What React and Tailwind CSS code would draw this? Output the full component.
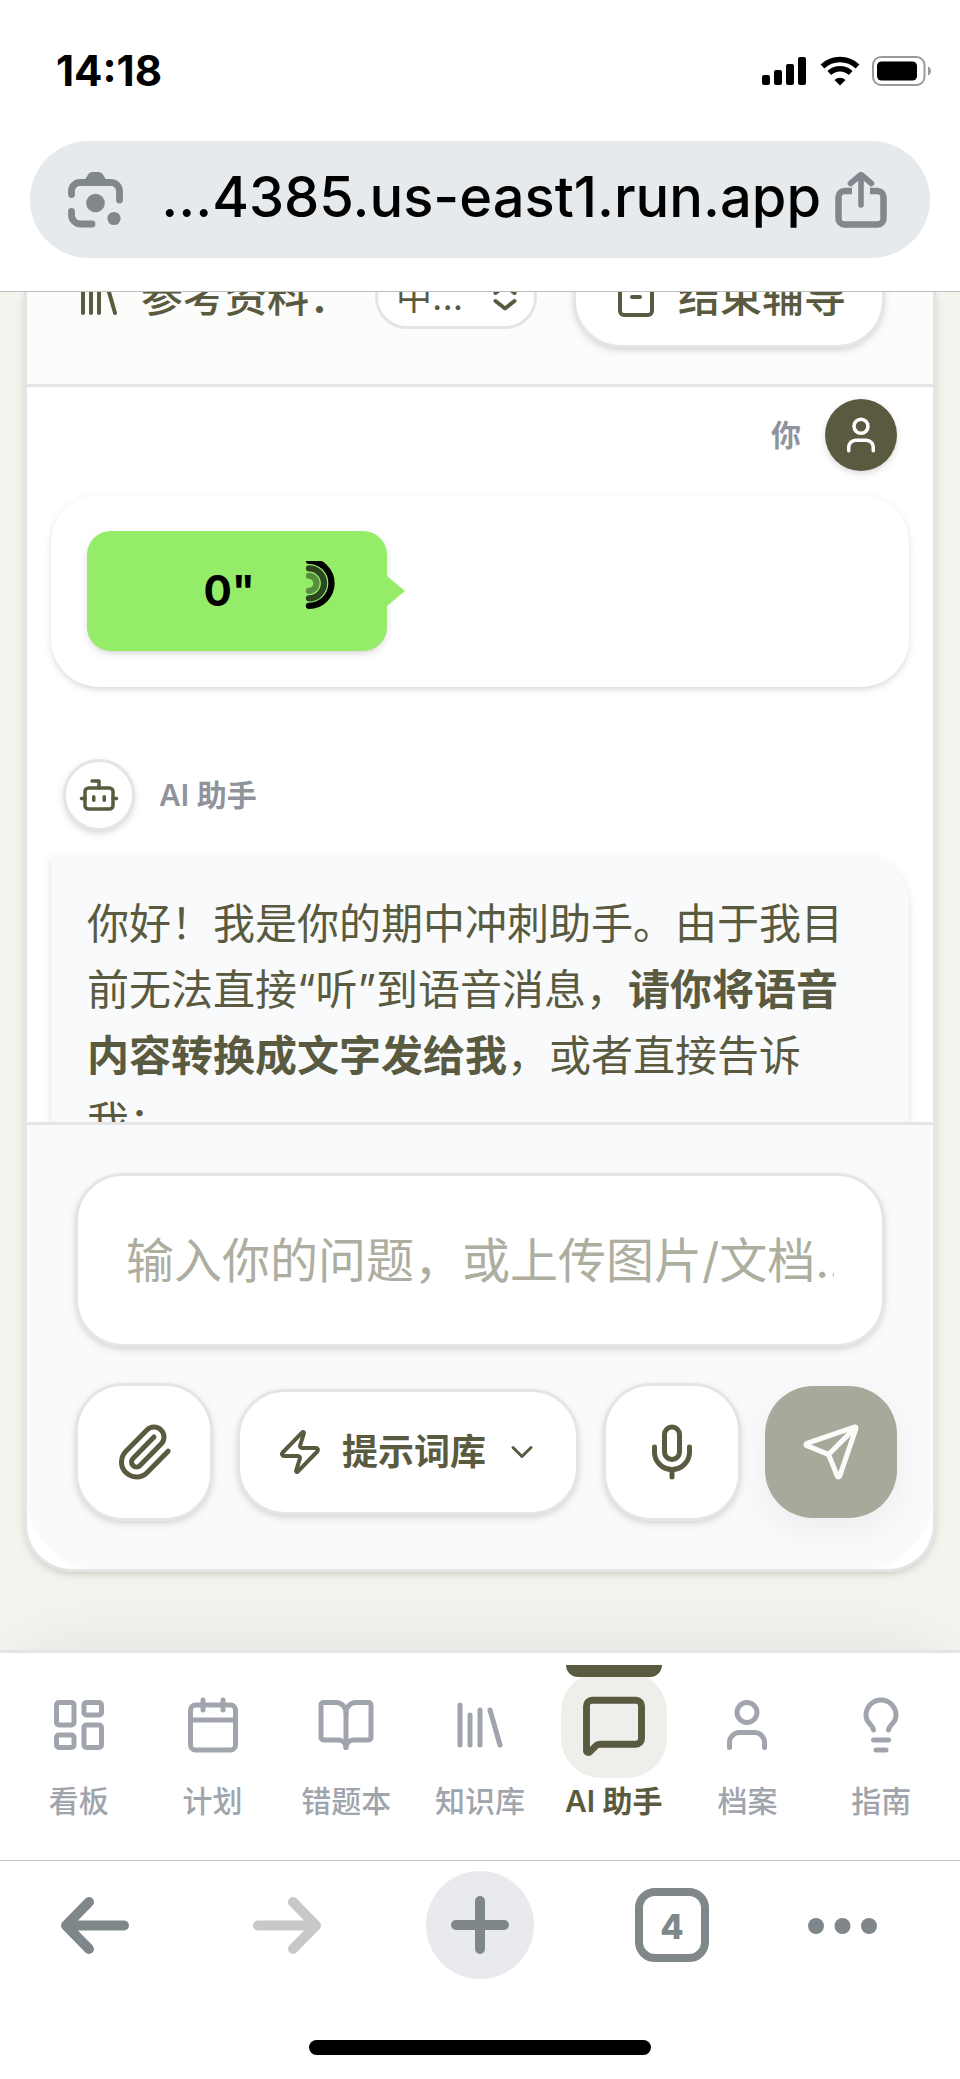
import { useState } from "react";
import {
  Archive,
  Bot,
  BookOpen,
  Calendar,
  ChevronDown,
  LayoutDashboard,
  Library,
  Lightbulb,
  MessageSquare,
  Mic,
  Paperclip,
  Send,
  User,
  Zap,
} from "lucide-react";

const navItems = [
  { id: "dashboard", label: "看板", icon: LayoutDashboard },
  { id: "plan", label: "计划", icon: Calendar },
  { id: "mistakes", label: "错题本", icon: BookOpen },
  { id: "library", label: "知识库", icon: Library },
  { id: "assistant", label: "AI 助手", icon: MessageSquare },
  { id: "profile", label: "档案", icon: User },
  { id: "guide", label: "指南", icon: Lightbulb },
];

const softShadow = "shadow-[0_3px_9px_rgba(0,0,0,0.1),0_3px_6px_-3px_rgba(0,0,0,0.1)]";

const StatusBar = () => (
  <div className="flex h-[141px] items-center justify-between pr-7 pl-14">
    <span className="text-[42px] leading-none font-bold">14:18</span>
    <div className="flex items-center gap-3">
      <svg width="46" height="30" viewBox="0 0 46 30">
        <rect x="0" y="19" width="8" height="10" rx="2" />
        <rect x="12" y="14" width="8" height="15" rx="2" />
        <rect x="24" y="8" width="8" height="21" rx="2" />
        <rect x="36" y="1" width="8" height="28" rx="2" />
      </svg>
      <svg width="40" height="30" viewBox="0 0 40 30" fill="none" stroke="#000">
        <path d="M2.5 10.5a25.5 25.5 0 0 1 35 0" strokeWidth="5.6" />
        <path d="M9.3 17a15.6 15.6 0 0 1 21.4 0" strokeWidth="5.4" />
        <path d="M20 29.5l-5.5-5.6a8 8 0 0 1 11 0z" fill="#000" stroke="none" />
      </svg>
      <svg width="60" height="30" viewBox="0 0 60 30" fill="none">
        <rect x="1" y="1" width="51.5" height="28" rx="8" stroke="#9a9a9a" strokeWidth="2" />
        <rect x="5" y="5.5" width="40" height="19" rx="4.5" fill="#000" />
        <path d="M56 10.5c4 1.5 4 7.5 0 9z" fill="#9a9a9a" />
      </svg>
    </div>
  </div>
);

const AddressBar = () => (
  <div className="mx-[30px] mb-[33px] flex h-[117px] items-center gap-3.5 rounded-full bg-[#e6eaed] pr-[43px] pl-[38px]">
    <button type="button" aria-label="Lens">
      <svg width="56" height="56" viewBox="0 0 56 56" fill="none">
        <path
          d="M3.5 22.5v-3.5a8.5 8.5 0 0 1 8.5-8.5h31a8.5 8.5 0 0 1 8.5 8.5v9"
          stroke="#80888b"
          strokeWidth="6.8"
          strokeLinecap="round"
        />
        <path
          d="M3.5 39.5v3.5a9 9 0 0 0 9 9h11.5"
          stroke="#80888b"
          strokeWidth="6.8"
          strokeLinecap="round"
        />
        <path d="M16 9l3.5-5.5q1.500-3.500 5-3.500h6q3.500 0 5 3.500l3.500 5.500z" fill="#80888b" />
        <circle cx="27.5" cy="31" r="9.3" fill="#80888b" />
        <circle cx="46" cy="46.5" r="6.6" fill="#80888b" />
      </svg>
    </button>
    <span className="ml-auto pb-1.5 text-[56px] leading-none font-medium whitespace-nowrap">
      ...4385.us-east1.run.app
    </span>
    <button type="button" aria-label="Share">
      <svg width="52" height="56" viewBox="0 0 52 56" fill="none" stroke="#82878d">
        <path
          d="M17 19H9.5a6 6 0 0 0-6 6v21.5a6 6 0 0 0 6 6h33a6 6 0 0 0 6-6V25a6 6 0 0 0-6-6H35"
          strokeWidth="6.5"
        />
        <path
          d="M26 33V3.500M15.500 11.500 26 2.500 36.500 11.500"
          strokeWidth="5.6"
          strokeLinecap="round"
          strokeLinejoin="round"
        />
      </svg>
    </button>
  </div>
);

const SessionToolbar = () => (
  <div className="flex h-[95px] shrink-0 items-end overflow-hidden border-b-[3px] border-[#e5e5e5] bg-[#fcfcfa] px-12 pb-9">
    <div className="flex w-full items-center justify-between">
      <div className="flex items-center gap-6">
        <label htmlFor="reference" className="flex items-center gap-[18px] text-[42px] leading-[60px] font-medium">
          <Library size={48} />
          参考资料：
        </label>
        <div className="relative">
          <select
            id="reference"
            className="h-16 w-[162px] appearance-none rounded-[32px] border-[3px] border-[#e5e5e5] bg-white pl-[18px] text-4xl"
          >
            <option>中...</option>
          </select>
          <svg
            className="pointer-events-none absolute top-4 right-5"
            width="24"
            height="32"
            viewBox="0 0 24 32"
            fill="none"
            stroke="currentColor"
            strokeWidth="4"
            strokeLinecap="round"
            strokeLinejoin="round"
          >
            <path d="M2.500 12 12 4.500 21.500 12M2.500 20 12 27.500 21.500 20" />
          </svg>
        </div>
      </div>
      <button
        type="button"
        className={`flex h-[102px] items-center gap-[18px] rounded-[48px] border-[3px] border-[#e5e5e5] bg-white px-9 text-[42px] leading-[60px] font-medium ${softShadow}`}
      >
        <Archive size={48} />
        结束辅导
      </button>
    </div>
  </div>
);

const VoiceMessage = ({ seconds }) => (
  <button
    type="button"
    className={`relative flex h-[120px] w-[300px] items-center justify-end gap-12 rounded-3xl bg-[#95ec69] pr-9 text-black ${softShadow}`}
  >
    <span className="text-[42px] leading-none font-bold">{seconds}"</span>
    <svg width="48" height="60" viewBox="0 0 48 60" fill="none" stroke="#000" strokeWidth="6.3" strokeLinecap="round">
      <path d="M6 14.8a7.5 7.5 0 0 1 0 15" strokeOpacity="0.4" />
      <path d="M6 7.3a15 15 0 0 1 0 30" strokeOpacity="0.7" />
      <path d="M6-.2a22.5 22.5 0 0 1 0 45" />
    </svg>
    <span className="absolute top-1/2 left-full -translate-y-1/2 border-y-[15px] border-l-[18px] border-y-transparent border-l-[#95ec69]" />
  </button>
);

const ChatMessages = () => (
  <div className="flex min-h-0 flex-1 flex-col gap-[72px] overflow-hidden px-6 pt-3">
    <article className="flex shrink-0 flex-col gap-6">
      <div className="flex items-center justify-end gap-6 px-3">
        <span className="text-3xl font-semibold text-[#8f949c]">你</span>
        <span className={`flex size-[72px] items-center justify-center rounded-full bg-[#5a5a40] text-white ${softShadow}`}>
          <User size={42} />
        </span>
      </div>
      <div className={`rounded-[48px] bg-white p-9 ${softShadow}`}>
        <VoiceMessage seconds={0} />
      </div>
    </article>

    <article className="flex shrink-0 flex-col gap-6">
      <div className="flex items-center gap-6 px-3">
        <span
          className={`flex size-[72px] items-center justify-center rounded-full border-[3px] border-[#e5e5e5] bg-white ${softShadow}`}
        >
          <Bot size={42} />
        </span>
        <span className="text-3xl font-semibold text-[#8f949c]">AI 助手</span>
      </div>
      <div className={`rounded-[48px] rounded-tl-md bg-[#f9fafc] p-9 ${softShadow}`}>
        <p className="text-[42px] leading-[66px]">
          你好！我是你的期中冲刺助手。由于我目前无法直接“听”到语音消息，
          <strong className="font-semibold">请你将语音内容转换成文字发给我</strong>
          ，或者直接告诉我：
        </p>
      </div>
    </article>
  </div>
);

const Composer = () => {
  const [text, setText] = useState("");
  const squareButton = `flex size-[138px] shrink-0 items-center justify-center rounded-[48px] border-[3px] border-[#e5e5e5] bg-white ${softShadow}`;

  return (
    <form
      onSubmit={(e) => e.preventDefault()}
      className="relative isolate border-t-[3px] border-[#e5e5e5] p-12 before:absolute before:inset-0 before:-z-10 before:rounded-b-[72px] before:bg-[#f9fafc]"
    >
      <input
        type="text"
        aria-label="输入你的问题"
        placeholder="输入你的问题，或上传图片/文档..."
        value={text}
        onChange={(e) => setText(e.target.value)}
        className={`mb-9 h-[174px] w-full rounded-[48px] border-[3px] border-[#e5e5e5] bg-white px-12 text-5xl outline-none placeholder:text-[#adae9f] ${softShadow}`}
      />
      <div className="-mr-3 flex items-center gap-6">
        <button type="button" aria-label="上传附件" className={squareButton}>
          <Paperclip size={60} />
        </button>
        <button
          type="button"
          className={`flex h-[126px] flex-1 items-center justify-center gap-[18px] rounded-[48px] border-[3px] border-[#e5e5e5] bg-white text-4xl font-semibold whitespace-nowrap ${softShadow}`}
        >
          <Zap size={48} />
          提示词库
          <ChevronDown size={36} />
        </button>
        <button type="button" aria-label="语音输入" className={squareButton}>
          <Mic size={60} />
        </button>
        <button
          type="submit"
          aria-label="发送"
          className="flex size-[132px] shrink-0 items-center justify-center rounded-[48px] bg-[#a7a99b] text-[#fbfbfa] shadow-[0_12px_36px_rgba(0,0,0,0.06)]"
        >
          <Send size={60} />
        </button>
      </div>
    </form>
  );
};

const BottomNav = () => {
  const [active, setActive] = useState("assistant");

  return (
    <nav className="relative z-10 flex border-t-[3px] border-[#e5e5e5] bg-white px-3 py-3 shadow-[0_-24px_72px_-24px_rgba(0,0,0,0.08)]">
      {navItems.map(({ id, label, icon: Icon }) => {
        const isActive = id === active;
        return (
          <button
            key={id}
            type="button"
            onClick={() => setActive(id)}
            className={`relative flex h-[183px] flex-1 flex-col items-center pt-3 text-3xl leading-[45px] whitespace-nowrap ${
              isActive ? "font-semibold text-[#5a5a40]" : "font-medium text-[#a0a5ad]"
            }`}
          >
            {isActive && <span className="absolute top-0 z-10 h-3 w-24 rounded-b-xl bg-[#5a5a40]" />}
            <span className="mb-1.5 flex size-24 items-center justify-center">
              {isActive ? (
                <span className="flex size-[106px] shrink-0 items-center justify-center rounded-[40px] bg-[#eeeeea]">
                  <Icon size={66} strokeWidth={2.5} />
                </span>
              ) : (
                <Icon size={60} />
              )}
            </span>
            {label}
          </button>
        );
      })}
    </nav>
  );
};

const BrowserBar = () => (
  <footer className="relative z-10 border-t border-[#c4c6c8] bg-white pt-[10px]">
    <div className="grid grid-cols-5 justify-items-center text-[#7f878a]">
      <button type="button" aria-label="Back">
        <svg width="108" height="108" viewBox="0 0 108 108" fill="none" stroke="currentColor" strokeWidth="10" strokeLinecap="round" strokeLinejoin="round">
          <path d="M82 54.5H26M47 31 24 54.5 47 78" />
        </svg>
      </button>
      <button type="button" aria-label="Forward" disabled className="text-[#c8c8c8]">
        <svg width="108" height="108" viewBox="0 0 108 108" fill="none" stroke="currentColor" strokeWidth="10" strokeLinecap="round" strokeLinejoin="round">
          <path d="M24 54.5H81M59 31 82 54.5 59 78" />
        </svg>
      </button>
      <button type="button" aria-label="New tab" className="rounded-full bg-[#e8eaee]">
        <svg width="108" height="108" viewBox="0 0 108 108" fill="none" stroke="currentColor" strokeWidth="10" strokeLinecap="round">
          <path d="M54 30v48M30 54h48" />
        </svg>
      </button>
      <button type="button" aria-label="Tabs" className="flex size-[108px] items-center justify-center">
        <span className="flex size-[74px] items-center justify-center rounded-[20px] border-8 border-[#7f878a] pt-1 text-[34px] leading-none font-extrabold">
          4
        </span>
      </button>
      <button type="button" aria-label="More">
        <svg className="overflow-visible" width="108" height="108" viewBox="0 0 108 108" fill="currentColor">
          <circle cx="6" cy="55" r="8" />
          <circle cx="32.5" cy="55" r="8" />
          <circle cx="59" cy="55" r="8" />
        </svg>
      </button>
    </div>
    <div className="flex justify-center pt-[61px] pb-6">
      <div className="h-[15px] w-[342px] rounded-full bg-black" />
    </div>
  </footer>
);

const App = () => (
  <div
    lang="zh-CN"
    className="flex h-screen flex-col overflow-hidden bg-[#f3f4ee] font-['Inter','Noto_Sans_CJK_SC',sans-serif] text-[#5a5a40]"
  >
    <header className="relative z-10 border-b border-[#bdbfc1] bg-white text-black">
      <StatusBar />
      <AddressBar />
    </header>
    <main className="flex min-h-0 flex-1 flex-col px-6 pb-[78px]">
      <section
        className={`flex min-h-0 flex-1 flex-col overflow-hidden rounded-b-[48px] border-x-[3px] border-b-[3px] border-[#e5e5e5] bg-white ${softShadow}`}
      >
        <SessionToolbar />
        <ChatMessages />
        <Composer />
      </section>
    </main>
    <BottomNav />
    <BrowserBar />
  </div>
);

export default App;
